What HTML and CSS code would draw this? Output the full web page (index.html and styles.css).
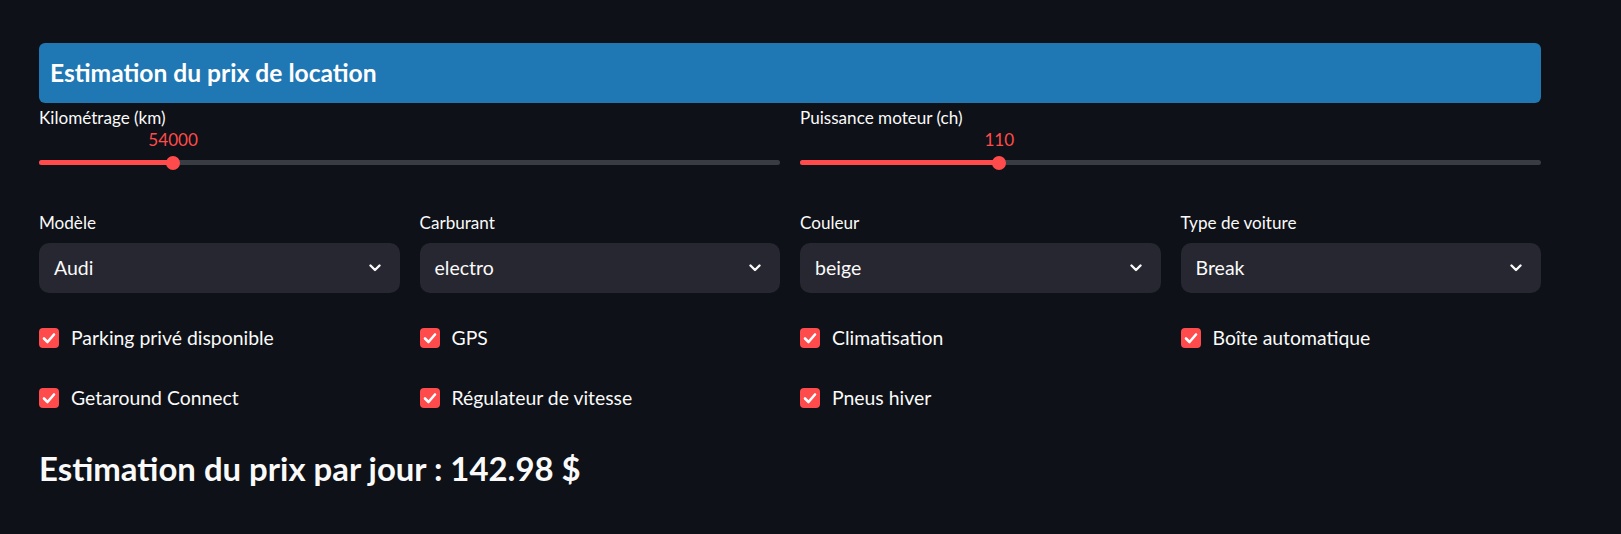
FILE: index.html
```html
<!DOCTYPE html>
<html lang="fr">
<head>
<meta charset="utf-8">
<title>Estimation du prix de location</title>
<link rel="stylesheet" href="styles.css">
</head>
<body>
<main class="main">
  <div class="banner"><h4 class="banner-title">Estimation du prix de location</h4></div>

  <div class="cols cols-2">
    <div class="field">
      <div class="label">Kilométrage (km)</div>
      <div class="slider" style="--p:18.1%">
        <div class="track"><div class="fill"></div></div>
        <div class="thumb"></div>
        <div class="value">54000</div>
      </div>
    </div>
    <div class="field">
      <div class="label">Puissance moteur (ch)</div>
      <div class="slider" style="--p:26.9%">
        <div class="track"><div class="fill"></div></div>
        <div class="thumb"></div>
        <div class="value">110</div>
      </div>
    </div>
  </div>

  <div class="cols cols-4 selects">
    <div class="field">
      <div class="label">Modèle</div>
      <div class="select"><span>Audi</span><svg class="chev" width="12" height="8" viewBox="0 0 12 8"><polyline points="1.5,1.5 6,6 10.5,1.5"/></svg></div>
    </div>
    <div class="field">
      <div class="label">Carburant</div>
      <div class="select"><span>electro</span><svg class="chev" width="12" height="8" viewBox="0 0 12 8"><polyline points="1.5,1.5 6,6 10.5,1.5"/></svg></div>
    </div>
    <div class="field">
      <div class="label">Couleur</div>
      <div class="select"><span>beige</span><svg class="chev" width="12" height="8" viewBox="0 0 12 8"><polyline points="1.5,1.5 6,6 10.5,1.5"/></svg></div>
    </div>
    <div class="field">
      <div class="label">Type de voiture</div>
      <div class="select"><span>Break</span><svg class="chev" width="12" height="8" viewBox="0 0 12 8"><polyline points="1.5,1.5 6,6 10.5,1.5"/></svg></div>
    </div>
  </div>

  <div class="cols cols-4 checks">
    <div class="check"><span class="box"><svg width="20" height="20" viewBox="0 0 20 20"><polyline points="5,10.5 8.5,14 15,6.5"/></svg></span>Parking privé disponible</div>
    <div class="check"><span class="box"><svg width="20" height="20" viewBox="0 0 20 20"><polyline points="5,10.5 8.5,14 15,6.5"/></svg></span>GPS</div>
    <div class="check"><span class="box"><svg width="20" height="20" viewBox="0 0 20 20"><polyline points="5,10.5 8.5,14 15,6.5"/></svg></span>Climatisation</div>
    <div class="check"><span class="box"><svg width="20" height="20" viewBox="0 0 20 20"><polyline points="5,10.5 8.5,14 15,6.5"/></svg></span>Boîte automatique</div>
    <div class="check"><span class="box"><svg width="20" height="20" viewBox="0 0 20 20"><polyline points="5,10.5 8.5,14 15,6.5"/></svg></span>Getaround Connect</div>
    <div class="check"><span class="box"><svg width="20" height="20" viewBox="0 0 20 20"><polyline points="5,10.5 8.5,14 15,6.5"/></svg></span>Régulateur de vitesse</div>
    <div class="check"><span class="box"><svg width="20" height="20" viewBox="0 0 20 20"><polyline points="5,10.5 8.5,14 15,6.5"/></svg></span>Pneus hiver</div>
  </div>

  <h3 class="result">Estimation du prix par jour : 142.98 $</h3>
</main>
</body>
</html>
```

FILE: styles.css
```css
* { box-sizing: border-box; }
html, body {
  margin: 0;
  background: #0e1117;
  color: #fafafa;
  font-family: Lato, "Noto Sans", sans-serif;
}
.main {
  width: 1541px;
  padding: 43px 0 0 39px;
}
.banner {
  height: 60px;
  background: #1f77b4;
  border-radius: 6px;
  display: flex;
  align-items: center;
  padding-left: 11px;
}
.banner-title {
  margin: 0;
  font-size: 24.6px;
  font-weight: 700;
  line-height: 1.2;
  color: #ffffff;
}
.cols {
  display: grid;
  column-gap: 20px;
}
.cols-2 { grid-template-columns: 1fr 1fr; margin-top: 3px; }
.cols-4 { grid-template-columns: repeat(4, 1fr); }
.label {
  font-size: 17.1px;
  line-height: 24px;
  height: 24px;
}
.slider {
  position: relative;
  height: 44px;
  padding-top: 30px;
}
.track {
  height: 5px;
  border-radius: 3px;
  background: #3a3c44;
  overflow: hidden;
}
.fill {
  width: var(--p);
  height: 100%;
  background: #ff4b4b;
}
.thumb {
  position: absolute;
  top: 25.5px;
  left: var(--p);
  width: 14px;
  height: 14px;
  margin-left: -7px;
  border-radius: 50%;
  background: #ff4b4b;
}
.value {
  position: absolute;
  top: 0;
  left: var(--p);
  transform: translateX(-50%);
  font-size: 17.1px;
  line-height: 20px;
  color: #ff4b4b;
}
.selects { margin-top: 36.5px; }
.selects .label { margin-bottom: 8px; }
.select {
  height: 50px;
  background: #262730;
  border-radius: 10px;
  display: flex;
  align-items: center;
  justify-content: space-between;
  padding: 0 19px 0 15px;
  font-size: 19.5px;
}
.chev polyline {
  fill: none;
  stroke: #fafafa;
  stroke-width: 2.4;
  stroke-linecap: round;
  stroke-linejoin: round;
}
.checks {
  margin-top: 31px;
  row-gap: 32px;
}
.check {
  display: flex;
  align-items: center;
  height: 28px;
  font-size: 19.4px;
  gap: 12px;
}
.box {
  width: 20px;
  height: 20px;
  border-radius: 4px;
  background: #ff4b4b;
  display: flex;
}
.box polyline {
  fill: none;
  stroke: #ffffff;
  stroke-width: 2.6;
  stroke-linecap: round;
  stroke-linejoin: round;
}
.result {
  margin: 36px 0 0;
  font-size: 32.9px;
  line-height: 42px;
  font-weight: 700;
}
```
